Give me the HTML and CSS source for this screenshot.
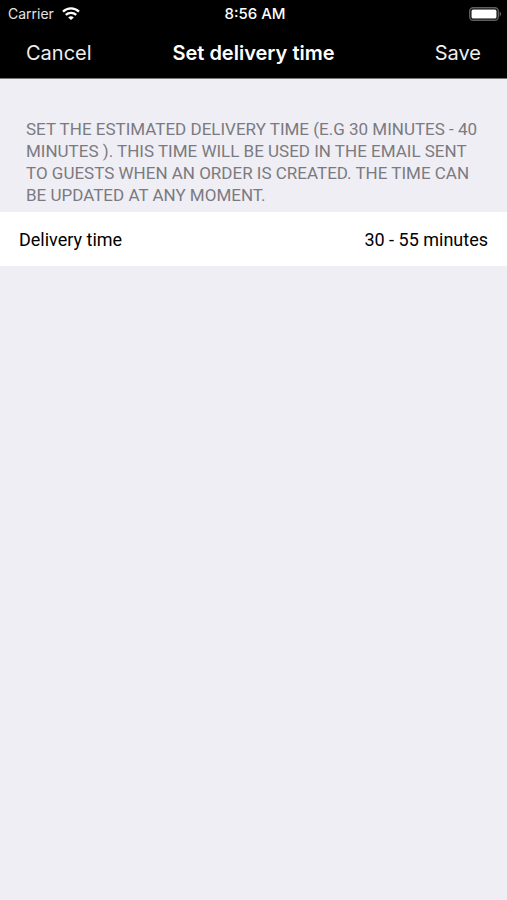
FILE: index.html
```html
<!DOCTYPE html>
<html lang="en">
<head>
    <meta charset="utf-8">
    <meta name="viewport" content="width=device-width, initial-scale=1">
    <title>Set delivery time</title>
    <link rel="stylesheet" href="styles.css">
</head>
<body>
    <header>
        <div class="status-bar">
            <div class="carrier">
                <span>Carrier</span>
                <svg class="wifi" viewBox="0 0 18 14" aria-hidden="true">
                    <path d="M1 4.7a11.5 11.5 0 0 1 16 0" />
                    <path d="M3.8 7.9a7.5 7.5 0 0 1 10.4 0" />
                    <path class="wifi-dot" d="M9 13L6.2 10.4a4.3 4.3 0 0 1 5.6 0z" />
                </svg>
            </div>
            <span class="clock">8:56 AM</span>
            <svg class="battery" viewBox="0 0 33 14" aria-hidden="true">
                <rect class="battery-case" x="0.7" y="0.7" width="28.6" height="12.6" rx="3.5" />
                <rect class="battery-level" x="2.5" y="2.5" width="25" height="9" rx="1.5" />
                <path class="battery-tip" d="M30.6 4.6c2 .8 2 4 0 4.8z" />
            </svg>
        </div>
        <nav class="navbar">
            <button type="button">Cancel</button>
            <h1>Set delivery time</h1>
            <button type="button">Save</button>
        </nav>
    </header>
    <main>
        <p class="description">Set the estimated delivery time (e.g 30 minutes - 40 minutes ). This time will be used in the email sent to guests when an order is created. The time can be updated at any moment.</p>
        <button type="button" class="row">
            <span>Delivery time</span>
            <span>30 - 55 minutes</span>
        </button>
    </main>
</body>
</html>
```
FILE: styles.css
```css
body {
    font-family: Inter, "Liberation Sans", sans-serif;
    margin: 0;
    background-color: #efeef4;
}
header {
    background-color: #000;
    color: #fff;
    border-bottom: 1px solid #77777a;
}
button {
    background: none;
    border: none;
    padding: 0;
    color: inherit;
    font-family: inherit;
    cursor: pointer;
}
.status-bar {
    display: grid;
    grid-template-columns: 1fr auto 1fr;
    align-items: center;
    height: 27px;
    padding: 0 5px 0 8px;
    font-size: 14px;
}
.carrier {
    display: flex;
    align-items: center;
    gap: 8px;
    color: #e4e4e4;
}
.clock {
    font-size: 15px;
    font-weight: 500;
}
.wifi {
    width: 18px;
    height: 14px;
    fill: none;
    stroke: #fff;
    stroke-width: 2.3;
}
.wifi-dot {
    fill: #fff;
    stroke: none;
}
.battery {
    justify-self: end;
    width: 33px;
    height: 14px;
}
.battery-case {
    fill: none;
    stroke: #606060;
    stroke-width: 1.4;
}
.battery-level {
    fill: #fff;
}
.battery-tip {
    fill: #606060;
}
.navbar {
    display: grid;
    grid-template-columns: 1fr auto 1fr;
    align-items: center;
    height: 51px;
    padding: 0 26px;
}
.navbar h1 {
    margin: 0;
    font-size: 20px;
    font-weight: 600;
}
.navbar button {
    justify-self: start;
    color: #eee;
    font-size: 20px;
}
.navbar button:last-child {
    justify-self: end;
}
.description {
    margin: 0;
    padding: 39px 26px 6px;
    color: #7b7a80;
    font-family: Roboto, sans-serif;
    font-size: 17px;
    line-height: 22px;
    text-transform: uppercase;
}
.row {
    display: flex;
    justify-content: space-between;
    align-items: center;
    width: 100%;
    height: 54px;
    padding: 0 19px;
    background-color: #fff;
    color: #000;
    font-family: Roboto, sans-serif;
    font-size: 18px;
}
```
